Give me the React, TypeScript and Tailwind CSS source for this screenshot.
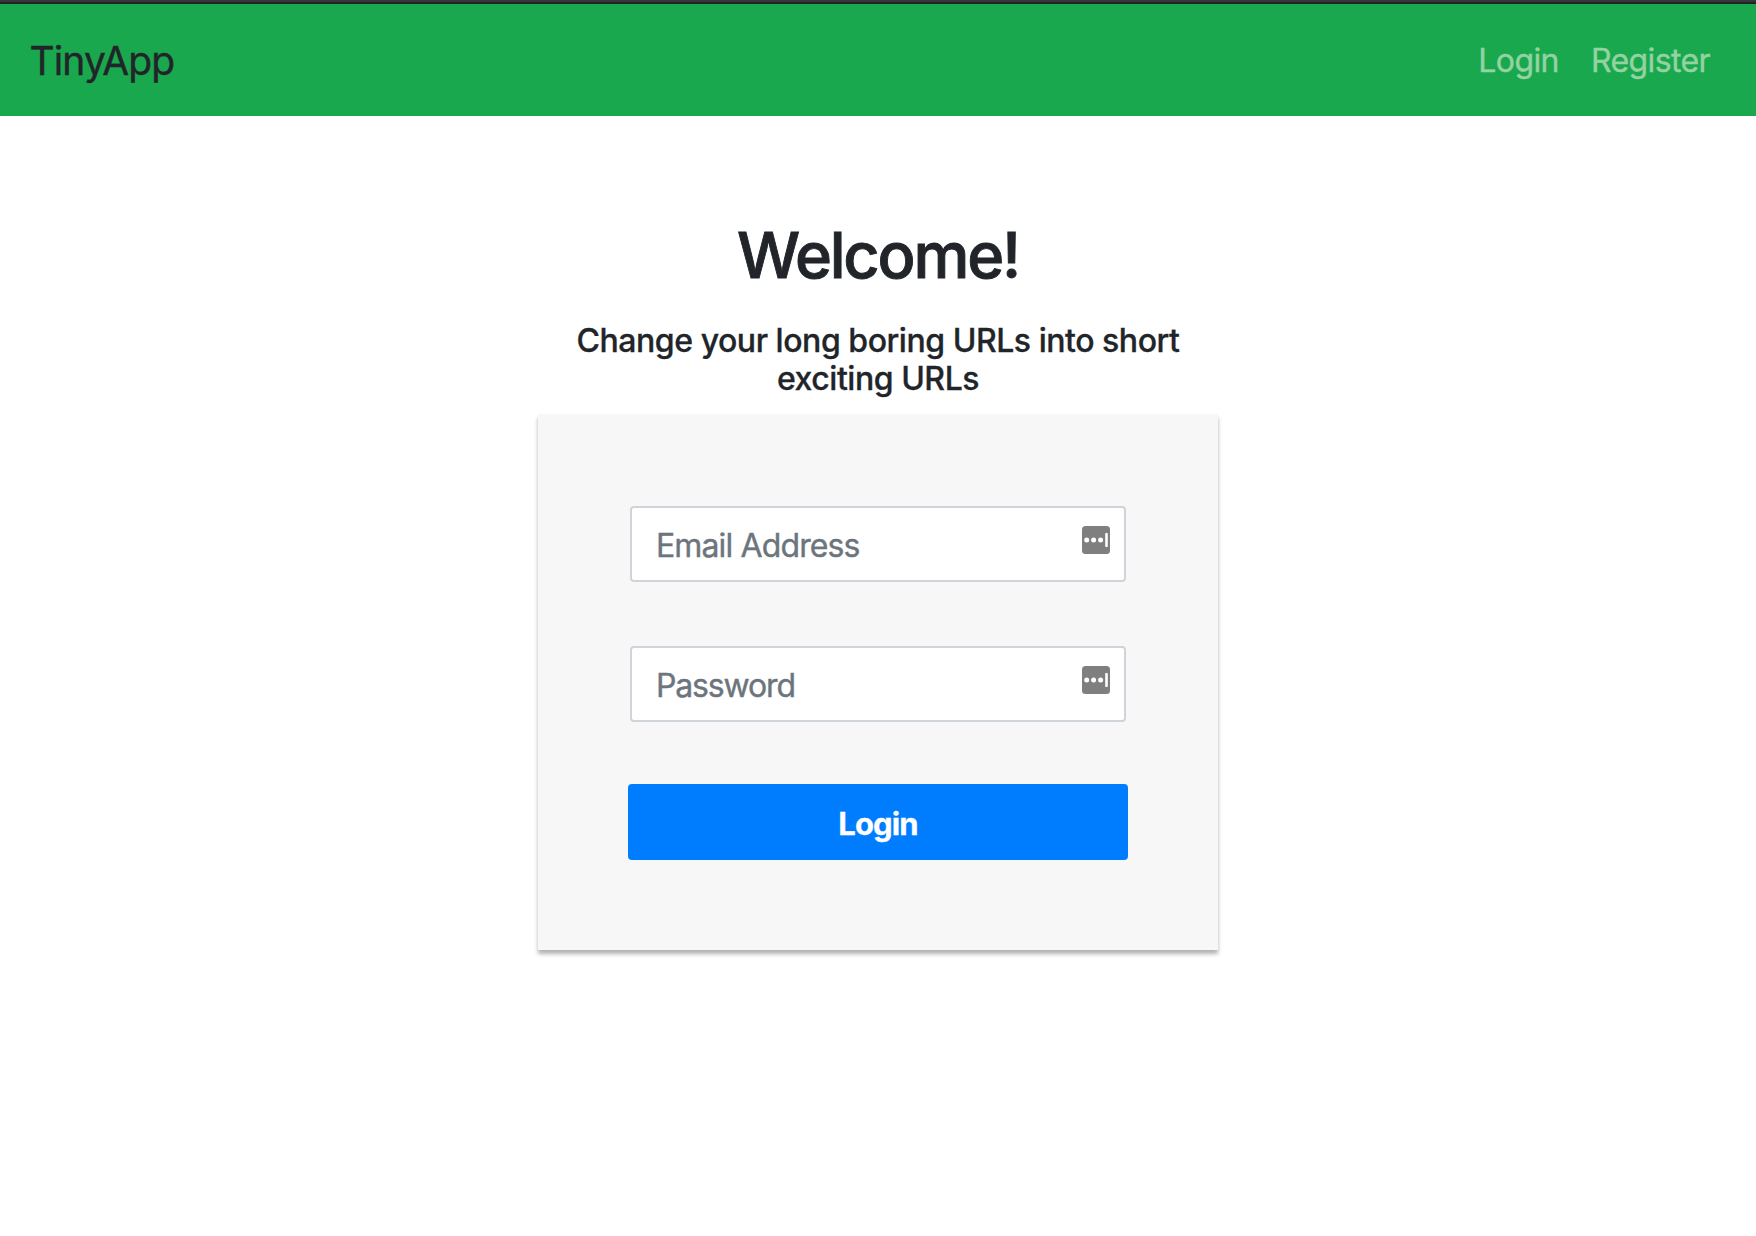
function ManagerIcon() {
  return (
    <svg className="absolute right-4 top-5 size-7" viewBox="0 0 28 28" aria-hidden="true">
      <rect width="28" height="28" rx="3.5" fill="#7f7f7f" />
      <circle cx="4.7" cy="14" r="2.5" fill="#fff" />
      <circle cx="11.6" cy="14" r="2.5" fill="#fff" />
      <circle cx="18.6" cy="14" r="2.5" fill="#fff" />
      <rect x="23.2" y="7" width="2.6" height="14" rx="0.8" fill="#fff" />
    </svg>
  );
}

function Field({ type, placeholder, className }: { type: string; placeholder: string; className: string }) {
  return (
    <div className="relative mx-0.5">
      <input
        type={type}
        placeholder={placeholder}
        className={`block h-19 w-full rounded-[4px] border-2 border-[#ced4da] bg-white px-6 pt-0.5 text-[32px] text-[#495057] outline-none [-webkit-text-stroke:0.4px] placeholder:text-[#6c757d] ${className}`}
      />
      <ManagerIcon />
    </div>
  );
}

export default function App() {
  return (
    <div className="min-h-screen bg-white font-['Inter',sans-serif] text-[#212529]">
      <header>
        <div className="h-0.5 bg-[#35363a]" />
        <div className="h-0.5 bg-[#222327]" />
        <nav className="flex h-28 items-center justify-between bg-[#1aa84e] pl-[29.5px] pr-[46px]">
          <a href="#" className="pt-px text-[39px] leading-[60px] tracking-[-0.9px] [-webkit-text-stroke:0.4px]">TinyApp</a>
          <div className="flex gap-8 pt-0.5 text-[32px] leading-12 tracking-[-0.6px] text-[#93d3a2] [-webkit-text-stroke:0.4px]">
            <a href="#">Login</a>
            <a href="#">Register</a>
          </div>
        </nav>
      </header>
      <main className="mx-auto w-[680px] pt-[101px]">
        <h1 className="text-center text-[63px] font-medium leading-[77px] tracking-[-2.2px] [-webkit-text-stroke:0.9px]">Welcome!</h1>
        <h2 className="mt-7 text-center text-[32px] font-medium leading-[38px] tracking-[-0.46px] [-webkit-text-stroke:0.3px]">
          Change your long boring URLs into short
          <br />
          exciting URLs
        </h2>
        <form
          className="mt-4 h-[536px] bg-[#f7f7f7] px-[90px] pt-[92px] shadow-[0_4px_4px_rgba(0,0,0,0.3)]"
          onSubmit={(event) => event.preventDefault()}
        >
          <Field type="email" placeholder="Email Address" className="tracking-[-0.87px]" />
          <div className="h-16" />
          <Field type="password" placeholder="Password" className="tracking-[-1.15px]" />
          <button
            type="submit"
            className="mt-[62px] block h-19 w-full rounded-[4px] bg-[#007dff] pt-0.5 text-[31px] font-bold leading-[45px] tracking-[-0.9px] text-white [-webkit-text-stroke:0.3px]"
          >
            Login
          </button>
        </form>
      </main>
    </div>
  );
}
